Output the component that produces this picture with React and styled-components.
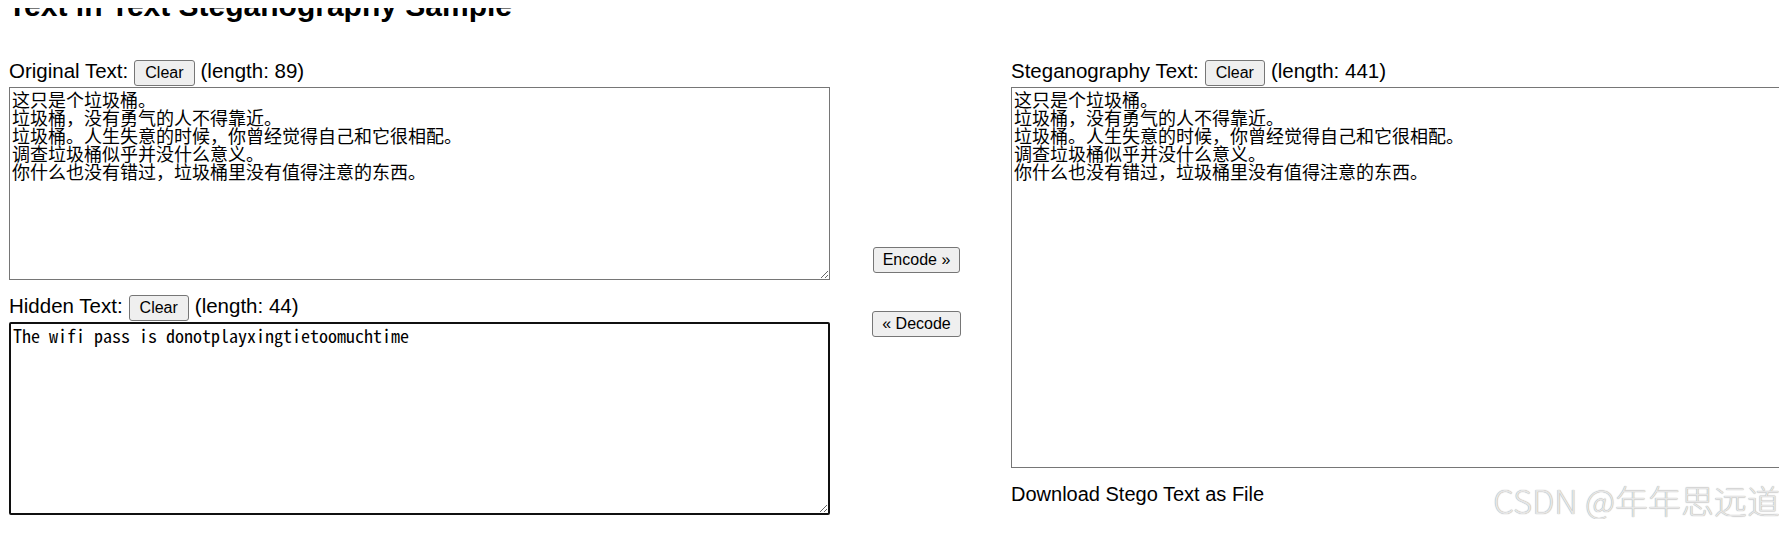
import React, {useState} from "react"
import styled, {createGlobalStyle} from "styled-components"

const GlobalStyle = createGlobalStyle`
  html {
    overflow: hidden;
  }
  body {
    margin: 8px;
    background: #fff;
    color: #000;
    font-family: "Liberation Sans", Arial, sans-serif;
  }
`

const Page = styled.div`
  display: flow-root;
  position: relative;
  width: 1779px;
  height: 511px;
`

const Title = styled.h1`
  margin: -20px 0 35px;
  height: 36px;
  font-size: 30px;
  line-height: 36px;
  font-weight: bold;
  white-space: nowrap;
`

const Columns = styled.div`
  display: flex;
  align-items: flex-start;
`

const Column = styled.div`
  display: flex;
  flex-direction: column;
  width: ${(p) => p.width}px;
  padding-left: 1px;
  flex-shrink: 0;
`

const Middle = styled.div`
  display: flex;
  flex-direction: column;
  align-items: center;
  width: 173px;
  padding: 188px 7px 0 0;
  flex-shrink: 0;
`

const LabelRow = styled.div`
  display: flex;
  align-items: baseline;
  gap: 6px;
  height: 28px;
  margin-top: ${(p) => p.top || 0}px;
  font-size: 20.5px;
  line-height: 24px;
  white-space: nowrap;
`

const Button = styled.button`
  height: 26px;
  padding: 0 ${(p) => p.pad || 10}px;
  margin-top: ${(p) => p.top || 0}px;
  border: 1px solid #767676;
  border-radius: 3px;
  background: #efefef;
  color: #000;
  font-family: "Liberation Sans", Arial, sans-serif;
  font-size: 16px;
  line-height: 18px;
  cursor: pointer;

  &:hover {
    background: #e5e5e5;
  }
`

const TextBox = styled.textarea`
  box-sizing: border-box;
  width: 821px;
  height: ${(p) => p.h}px;
  margin: 0;
  padding: 2px;
  border: ${(p) => (p.active ? "2px solid #101010" : "1px solid #767676")};
  border-radius: ${(p) => (p.active ? "2px" : "0")};
  outline: none;
  font-family: "Noto Sans Mono CJK SC", "Noto Sans CJK SC", "Liberation Mono", monospace;
  font-size: 18px;
  line-height: 18px;
  color: #000;
  background: #fff;
`

const Download = styled.div`
  margin-top: 15px;
  font-size: 20px;
  line-height: 23px;
  cursor: pointer;
`

const Watermark = styled.div`
  position: absolute;
  right: 7px;
  bottom: 0;
  font-family: "Noto Sans CJK SC", sans-serif;
  font-weight: 300;
  font-size: 33px;
  line-height: 38px;
  color: #e6e6e6;
  text-shadow: 0 0 1px #8c8c8c;
  white-space: nowrap;
  pointer-events: none;
`

const ORIGINAL = `这只是个垃圾桶。
垃圾桶，没有勇气的人不得靠近。
垃圾桶。人生失意的时候，你曾经觉得自己和它很相配。
调查垃圾桶似乎并没什么意义。
你什么也没有错过，垃圾桶里没有值得注意的东西。`

const HIDDEN = "The wifi pass is donotplayxingtietoomuchtime"

const App = () => {
  const [original, setOriginal] = useState(ORIGINAL)
  const [hidden, setHidden] = useState(HIDDEN)
  const [stego, setStego] = useState(ORIGINAL)

  return (
    <Page>
      <GlobalStyle />
      <Title>Text in Text Steganography Sample</Title>
      <Columns>
        <Column width={821}>
          <LabelRow>
            <span>Original Text:</span>
            <Button onClick={() => setOriginal("")}>Clear</Button>
            <span>(length: 89)</span>
          </LabelRow>
          <TextBox h={193} value={original} onChange={(e) => setOriginal(e.target.value)} />
          <LabelRow top={14}>
            <span>Hidden Text:</span>
            <Button onClick={() => setHidden("")}>Clear</Button>
            <span>(length: 44)</span>
          </LabelRow>
          <TextBox h={193} active value={hidden} onChange={(e) => setHidden(e.target.value)} />
        </Column>
        <Middle>
          <Button pad={9}>Encode »</Button>
          <Button pad={9} top={38}>« Decode</Button>
        </Middle>
        <Column width={821}>
          <LabelRow>
            <span>Steganography Text:</span>
            <Button onClick={() => setStego("")}>Clear</Button>
            <span>(length: 441)</span>
          </LabelRow>
          <TextBox h={381} value={stego} onChange={(e) => setStego(e.target.value)} />
          <Download>Download Stego Text as File</Download>
        </Column>
      </Columns>
      <Watermark>CSDN @年年思远道</Watermark>
    </Page>
  )
}

export default App
